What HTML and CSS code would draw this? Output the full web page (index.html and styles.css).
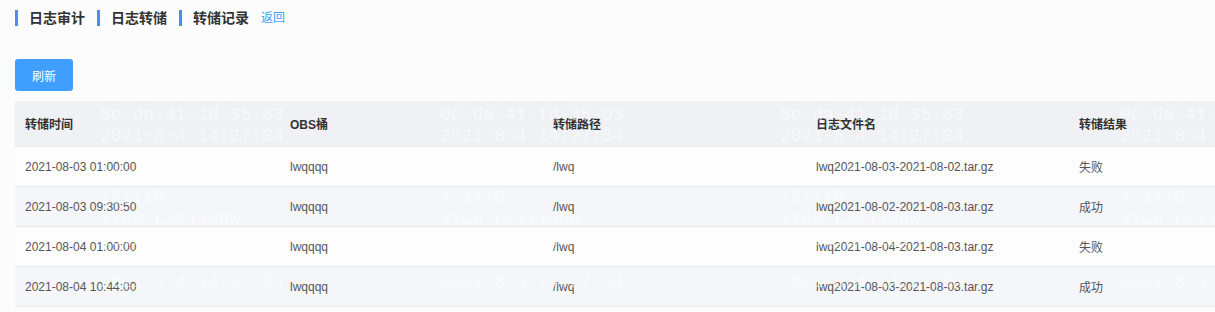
FILE: index.html
```html
<!DOCTYPE html>
<html lang="zh">
<head>
<meta charset="utf-8">
<title>转储记录</title>
<link rel="stylesheet" href="styles.css">
</head>
<body>
<div class="page">
  <nav class="crumbs">
    <span class="crumb">日志审计</span>
    <span class="crumb">日志转储</span>
    <span class="crumb">转储记录</span>
    <a class="back">返回</a>
  </nav>
  <button class="btn">刷新</button>
  <table class="grid">
    <colgroup>
      <col class="col-first"><col class="col"><col class="col"><col class="col"><col class="col">
    </colgroup>
    <thead>
      <tr><th>转储时间</th><th>OBS桶</th><th>转储路径</th><th>日志文件名</th><th>转储结果</th></tr>
    </thead>
    <tbody>
      <tr><td>2021-08-03 01:00:00</td><td>lwqqqq</td><td>/lwq</td><td>lwq2021-08-03-2021-08-02.tar.gz</td><td>失败</td></tr>
      <tr><td>2021-08-03 09:30:50</td><td>lwqqqq</td><td>/lwq</td><td>lwq2021-08-02-2021-08-03.tar.gz</td><td>成功</td></tr>
      <tr><td>2021-08-04 01:00:00</td><td>lwqqqq</td><td>/lwq</td><td>lwq2021-08-04-2021-08-03.tar.gz</td><td>失败</td></tr>
      <tr><td>2021-08-04 10:44:00</td><td>lwqqqq</td><td>/lwq</td><td>lwq2021-08-03-2021-08-03.tar.gz</td><td>成功</td></tr>
    </tbody>
  </table>
</div>
<div class="watermark" aria-hidden="true">
  <div class="wm">liwanqing 21110
121110
VYCD-L21110HW
10.51.20.131
0c-da-41-1d-35-03
2021-8-4 14:27:34</div>
  <div class="wm">liwanqing 21110
121110
VYCD-L21110HW
10.51.20.131
0c-da-41-1d-35-03
2021-8-4 14:27:34</div>
  <div class="wm">liwanqing 21110
121110
VYCD-L21110HW
10.51.20.131
0c-da-41-1d-35-03
2021-8-4 14:27:34</div>
  <div class="wm">liwanqing 21110
121110
VYCD-L21110HW
10.51.20.131
0c-da-41-1d-35-03
2021-8-4 14:27:34</div>
  <div class="wm">liwanqing 21110
121110
VYCD-L21110HW
10.51.20.131
0c-da-41-1d-35-03
2021-8-4 14:27:34</div>
  <div class="wm">liwanqing 21110
121110
VYCD-L21110HW
10.51.20.131
0c-da-41-1d-35-03
2021-8-4 14:27:34</div>
  <div class="wm">liwanqing 21110
121110
VYCD-L21110HW
10.51.20.131
0c-da-41-1d-35-03
2021-8-4 14:27:34</div>
  <div class="wm">liwanqing 21110
121110
VYCD-L21110HW
10.51.20.131
0c-da-41-1d-35-03
2021-8-4 14:27:34</div>
</div>
</body>
</html>
```
FILE: styles.css
```css
html, body {
  margin: 0;
  padding: 0;
  background: #fcfcfc;
  overflow: hidden;
  width: 1215px;
  height: 312px;
}
body {
  position: relative;
  font-family: "Liberation Sans", Arial, "Noto Sans CJK SC", sans-serif;
  color: #333;
}
.page {
  padding: 8px 0 0 15px;
}
.crumbs {
  display: flex;
  align-items: center;
  height: 20px;
}
.crumb {
  display: flex;
  align-items: center;
  gap: 11px;
  margin-right: 12px;
  font-size: 14px;
  font-weight: bold;
  color: #333;
  line-height: 20px;
}
.crumb::before {
  content: "";
  display: block;
  width: 3px;
  height: 16px;
  background: #4a8ef2;
}
.back {
  font-size: 12px;
  color: #409eff;
  line-height: 20px;
  cursor: pointer;
}
.btn {
  display: block;
  margin-top: 31px;
  width: 58px;
  height: 32px;
  border: none;
  border-radius: 3px;
  background: #409eff;
  color: #fff;
  font-family: inherit;
  font-size: 12px;
  padding: 0;
}
.grid {
  margin-top: 10px;
  width: 1317px;
  table-layout: fixed;
  border-collapse: collapse;
  font-size: 12px;
}
.col-first { width: 265px; }
.col { width: 263px; }
.grid th,
.grid td {
  text-align: left;
  padding: 0 10px;
  border-bottom: 1px solid #e7e9ed;
  white-space: nowrap;
}
.grid th {
  height: 45px;
  background: #eff1f5;
  color: #333;
  font-weight: bold;
}
.grid td {
  height: 39px;
  color: #555;
  background: #fdfdfd;
}
.grid tbody tr:nth-child(even) td {
  background: #f5f6fa;
}
.watermark {
  position: absolute;
  top: 21px;
  left: 100px;
  display: grid;
  grid-template-columns: repeat(4, 340px);
  row-gap: 20px;
  pointer-events: none;
}
.wm {
  white-space: pre;
  font-family: "Liberation Mono", "DejaVu Sans Mono", monospace;
  font-size: 18px;
  line-height: 21px;
  color: rgba(255, 255, 255, 0.55);
}
```
